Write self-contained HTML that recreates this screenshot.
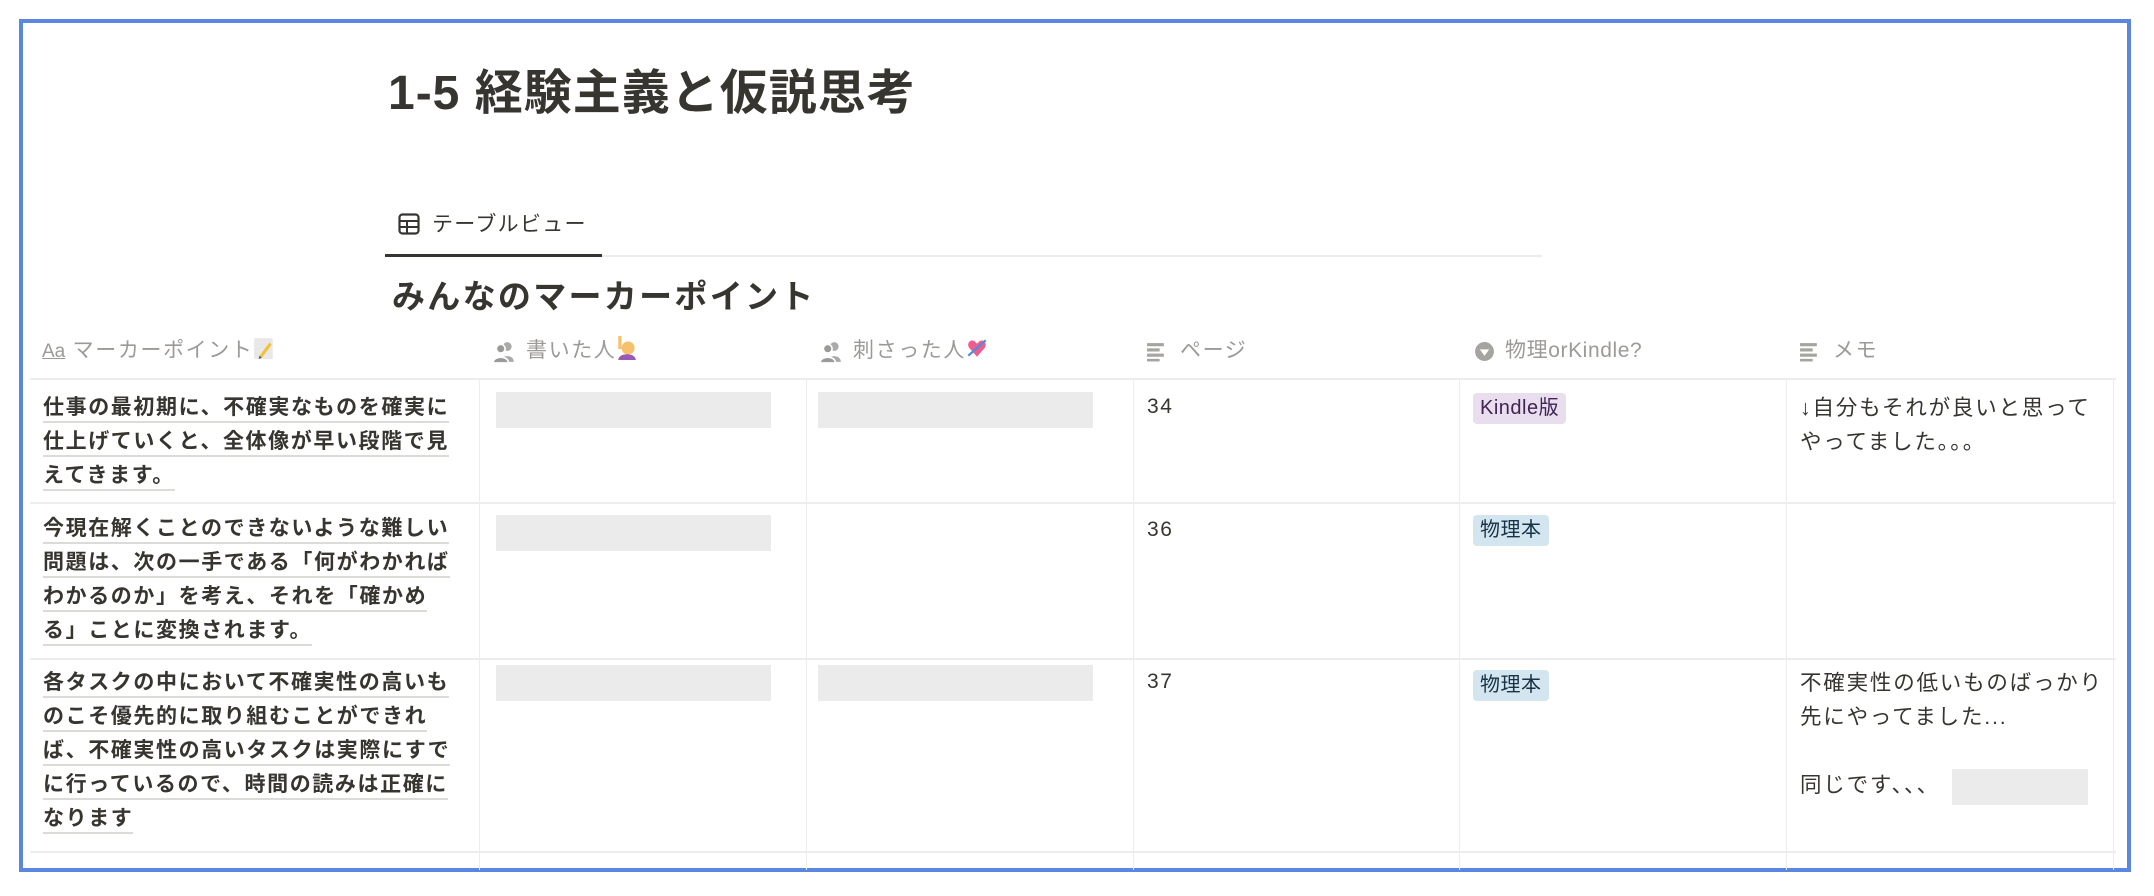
<!DOCTYPE html>
<html><head><meta charset="utf-8">
<style>
*{margin:0;padding:0;box-sizing:border-box}
body{width:2154px;height:896px;background:#fff;position:relative;overflow:hidden;font-family:"Liberation Sans","Noto Sans CJK JP",sans-serif;color:#37352f}
.abs{position:absolute}
.frame{left:19px;top:19px;width:2112px;height:853px;border:4px solid #5b87e0}
.title{left:388px;top:66px;font-size:48px;font-weight:bold;line-height:56px;letter-spacing:1px;color:#37352f}
.tab{left:432px;top:210px;font-size:21px;line-height:30px;letter-spacing:1.3px}
.h2{left:392px;top:275px;font-size:33px;font-weight:bold;line-height:44px;letter-spacing:2.3px}
.hd{top:336px;font-size:21px;line-height:30px;color:#9b9a97;letter-spacing:1.6px;white-space:nowrap}
.hline{left:30px;width:2086px;height:2px;background:#ededec}
.vline{width:1px;background:#ededec;top:379px;height:491px}
.cell{font-size:21px;line-height:34px;letter-spacing:1.6px;white-space:nowrap}
.m{font-size:21.5px;letter-spacing:1.8px}
.b{font-weight:bold}
.u span{border-bottom:2px solid #dcdbd8;padding-bottom:2px}
.gray{background:#ebebeb}
.tag{font-size:20px;line-height:31px;padding:0 7px;border-radius:4px;letter-spacing:0.5px}
</style></head><body>
<div class="abs frame"></div>
<div class="abs title">1-5 経験主義と仮説思考</div>

<svg class="abs" style="left:398px;top:213px" width="22" height="22" viewBox="0 0 22 22"><rect x="1.5" y="1.5" width="19" height="19" rx="3" fill="none" stroke="#37352f" stroke-width="2.2"/><line x1="1.5" y1="8" x2="20.5" y2="8" stroke="#37352f" stroke-width="2"/><line x1="1.5" y1="14" x2="20.5" y2="14" stroke="#37352f" stroke-width="2"/><line x1="9" y1="8" x2="9" y2="20.5" stroke="#37352f" stroke-width="2"/></svg>
<div class="abs tab">テーブルビュー</div>
<div class="abs" style="left:385px;top:254px;width:217px;height:3px;background:#37352f"></div>
<div class="abs" style="left:602px;top:255px;width:940px;height:2px;background:#ededec"></div>
<div class="abs h2">みんなのマーカーポイント</div>

<!-- header -->
<div class="abs hd" style="left:42px"><span style="font-size:19px;text-decoration:underline;letter-spacing:0">Aa</span> マーカーポイント<svg width="22" height="24" viewBox="0 0 20 22" style="vertical-align:-3px"><rect x="1" y="2" width="17" height="19" fill="#e8e8e8"/><path d="M6 18 L15 6 L17 8 L8 20 Z" fill="#f2c230"/><path d="M6 18 L8 20 L5 21Z" fill="#555"/></svg></div>
<svg class="abs" style="left:492px;top:340px" width="24" height="24" viewBox="0 0 22 22"><circle cx="14" cy="6" r="4" fill="#aaa"/><path d="M8 20 C8 13 20 13 20 20Z" fill="#aaa"/><circle cx="8" cy="8" r="4" fill="#9b9a97" stroke="#fff" stroke-width="1.5"/><path d="M1 21 C1 14 15 14 15 21Z" fill="#9b9a97" stroke="#fff" stroke-width="1.5"/></svg>
<div class="abs hd" style="left:526px">書いた人<svg width="22" height="24" viewBox="0 0 20 22" style="vertical-align:-3px"><circle cx="11" cy="11" r="6" fill="#f5c16c"/><path d="M2 22 C2 15 18 15 18 22Z" fill="#9b59b6"/><rect x="2" y="0" width="3" height="12" fill="#f5c16c"/></svg></div>
<svg class="abs" style="left:819px;top:340px" width="24" height="24" viewBox="0 0 22 22"><circle cx="14" cy="6" r="4" fill="#aaa"/><path d="M8 20 C8 13 20 13 20 20Z" fill="#aaa"/><circle cx="8" cy="8" r="4" fill="#9b9a97" stroke="#fff" stroke-width="1.5"/><path d="M1 21 C1 14 15 14 15 21Z" fill="#9b9a97" stroke="#fff" stroke-width="1.5"/></svg>
<div class="abs hd" style="left:853px">刺さった人<svg width="22" height="24" viewBox="0 0 20 22" style="vertical-align:-3px"><path d="M10 19 L3 11 C0 7 4 2 8 5 L10 7 L12 5 C16 2 20 7 17 11Z" fill="#ef5d8f"/><line x1="2" y1="18" x2="18" y2="4" stroke="#4a90d9" stroke-width="2"/></svg></div>
<svg class="abs" style="left:1146px;top:341px" width="21" height="21" viewBox="0 0 20 20"><rect x="1" y="2" width="16" height="3" fill="#a5a4a0"/><rect x="1" y="7" width="12" height="3" fill="#a5a4a0"/><rect x="1" y="12" width="16" height="3" fill="#a5a4a0"/><rect x="1" y="17" width="12" height="2.5" fill="#a5a4a0"/></svg>
<div class="abs hd" style="left:1180px">ページ</div>
<svg class="abs" style="left:1474px;top:341px" width="21" height="21" viewBox="0 0 20 20"><circle cx="10" cy="10" r="9" fill="#a5a4a0"/><path d="M5.5 8 L14.5 8 L10 14Z" fill="#fff"/></svg>
<div class="abs hd" style="left:1505px;letter-spacing:0.6px">物理orKindle?</div>
<svg class="abs" style="left:1799px;top:341px" width="21" height="21" viewBox="0 0 20 20"><rect x="1" y="2" width="16" height="3" fill="#a5a4a0"/><rect x="1" y="7" width="12" height="3" fill="#a5a4a0"/><rect x="1" y="12" width="16" height="3" fill="#a5a4a0"/><rect x="1" y="17" width="12" height="2.5" fill="#a5a4a0"/></svg>
<div class="abs hd" style="left:1833px">メモ</div>

<!-- grid lines -->
<div class="abs hline" style="top:378px"></div>
<div class="abs hline" style="top:502px"></div>
<div class="abs hline" style="top:658px"></div>
<div class="abs hline" style="top:851px"></div>
<div class="abs vline" style="left:479px"></div>
<div class="abs vline" style="left:806px"></div>
<div class="abs vline" style="left:1133px"></div>
<div class="abs vline" style="left:1459px"></div>
<div class="abs vline" style="left:1786px"></div>
<div class="abs vline" style="left:2113px"></div>

<!-- row1 -->
<div class="abs cell b u" style="left:43px;top:391px"><span>仕事の最初期に、不確実なものを確実に</span><br><span>仕上げていくと、全体像が早い段階で見</span><br><span>えてきます。</span></div>
<div class="abs gray" style="left:496px;top:392px;width:275px;height:36px"></div>
<div class="abs gray" style="left:818px;top:392px;width:275px;height:36px"></div>
<div class="abs cell" style="left:1147px;top:390px">34</div>
<div class="abs tag" style="left:1473px;top:393px;background:#e8deee;color:#412454">Kindle版</div>
<div class="abs cell m" style="left:1800px;top:391px">↓自分もそれが良いと思って<br>やってました。。。</div>

<!-- row2 -->
<div class="abs cell b u" style="left:43px;top:512px"><span>今現在解くことのできないような難しい</span><br><span>問題は、次の一手である「何がわかれば</span><br><span>わかるのか」を考え、それを「確かめ</span><br><span>る」ことに変換されます。</span></div>
<div class="abs gray" style="left:496px;top:515px;width:275px;height:36px"></div>
<div class="abs cell" style="left:1147px;top:513px">36</div>
<div class="abs tag" style="left:1473px;top:515px;background:#d3e5ef;color:#183347">物理本</div>

<!-- row3 -->
<div class="abs cell b u" style="left:43px;top:666px"><span>各タスクの中において不確実性の高いも</span><br><span>のこそ優先的に取り組むことができれ</span><br><span>ば、不確実性の高いタスクは実際にすで</span><br><span>に行っているので、時間の読みは正確に</span><br><span>なります</span></div>
<div class="abs gray" style="left:496px;top:665px;width:275px;height:36px"></div>
<div class="abs gray" style="left:818px;top:665px;width:275px;height:36px"></div>
<div class="abs cell" style="left:1147px;top:665px">37</div>
<div class="abs tag" style="left:1473px;top:670px;background:#d3e5ef;color:#183347">物理本</div>
<div class="abs cell m" style="left:1800px;top:666px">不確実性の低いものばっかり<br>先にやってました...<br><br>同じです、、、</div>
<div class="abs gray" style="left:1952px;top:769px;width:136px;height:36px"></div>
</body></html>
